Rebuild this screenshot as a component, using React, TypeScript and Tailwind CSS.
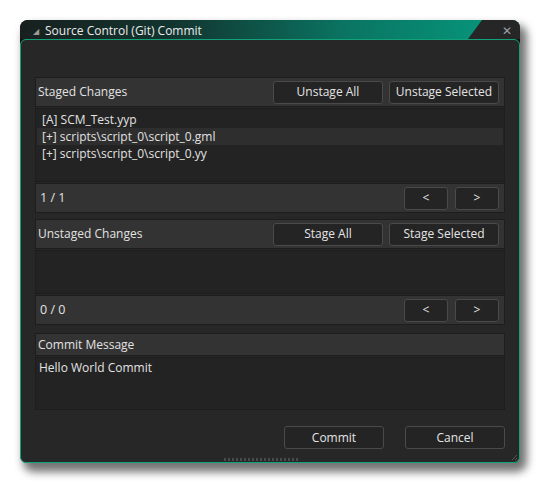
import { useState } from "react";

const font = { fontFamily: '"Open Sans", "Noto Sans", sans-serif' };

function Btn({ label, className = "" }: { label: string; className?: string }) {
  return (
    <button
      className={`flex h-[23px] items-center justify-center rounded-[3px] border border-[#4a4a4a] bg-[#242424] text-[12px] text-[#e4e4e4] ${className}`}
    >
      {label}
    </button>
  );
}

function Header({ title, actions, className = "h-[30px]" }: { title: string; actions?: string[]; className?: string }) {
  return (
    <div className={`flex items-center border border-[#1d1d1d] bg-[#333333] pl-[2px] pr-[5px] ${className}`}>
      <span className="flex-1 text-[12px] text-[#e2e2e2]">{title}</span>
      {actions && (
        <div className="flex gap-[6px]">
          <Btn label={actions[0]} className="w-[110px]" />
          <Btn label={actions[1]} className="w-[110px]" />
        </div>
      )}
    </div>
  );
}

function Pager({ text }: { text: string }) {
  return (
    <div className="mt-px flex h-[30px] items-center border border-[#1d1d1d] bg-[#333333] pl-[4px] pr-[5px]">
      <span className="flex-1 text-[12.5px] text-[#e2e2e2]">{text}</span>
      <div className="flex gap-[7px]">
        <Btn label="<" className="w-[44px] text-[11px]" />
        <Btn label=">" className="w-[44px] text-[11px]" />
      </div>
    </div>
  );
}

export default function App() {
  const [selected, setSelected] = useState(1);
  const staged = [
    "[A] SCM_Test.yyp",
    "[+] scripts\\script_0\\script_0.gml",
    "[+] scripts\\script_0\\script_0.yy",
  ];

  return (
    <div className="min-h-[484px] bg-white pl-[20px] pt-[20px]" style={font}>
      <div className="relative flex h-[443px] w-[500px] flex-col rounded-[8px] bg-[#121212] shadow-[5px_7px_9px_2px_rgba(0,0,0,0.55)]">
        {/* Title bar */}
        <div className="relative flex h-[19px] items-center overflow-hidden rounded-t-[8px] bg-[linear-gradient(90deg,#18201f_0%,#12342e_30%,#0a7462_65%,#069c80_100%)] pl-[13px] pt-[3px]">
          <span className="mr-[6px] text-[8px] leading-none text-[#9a9a9a]">◢</span>
          <span className="text-[12px] leading-none text-[#ececec]">Source Control (Git) Commit</span>
          <div className="absolute right-0 top-0 h-[19px] w-[52px] bg-[#262626] [clip-path:polygon(14px_0,100%_0,100%_100%,0_100%)]" />
          <span className="absolute right-[8px] top-[3px] text-[12px] leading-[16px] text-[#9aa0a6]">✕</span>
        </div>

        {/* Body */}
        <div className="relative flex flex-1 flex-col rounded-[6px] border border-[#12a27a] bg-[#272727] px-[14px] pt-[37px]">
          <Header title="Staged Changes" actions={["Unstage All", "Unstage Selected"]} />
          <div className="mt-px h-[74px] border border-[#1d1d1d] bg-[#232323] px-px pt-[2px]">
            {staged.map((s, i) => (
              <div
                key={s}
                onClick={() => setSelected(i)}
                className={`flex h-[17px] items-center pl-[5px] text-[12px] text-[#e2e2e2] ${
                  selected === i ? "bg-[#2e2e2e]" : ""
                }`}
              >
                {s}
              </div>
            ))}
          </div>
          <Pager text="1 / 1" />

          <div className="mt-[6px]">
            <Header title="Unstaged Changes" actions={["Stage All", "Stage Selected"]} />
          </div>
          <div className="mt-px h-[44px] border border-[#1d1d1d] bg-[#232323]" />
          <Pager text="0 / 0" />

          <div className="mt-[8px]">
            <Header title="Commit Message" className="h-[23px]" />
          </div>
          <div className="mt-px h-[53px] border border-[#1d1d1d] bg-[#232323] pl-[3px] pt-[1px] text-[12px] text-[#e2e2e2]">
            Hello World Commit
          </div>

          <div className="mt-[16px] flex justify-end gap-[21px]">
            <Btn label="Commit" className="w-[100px]" />
            <Btn label="Cancel" className="w-[100px]" />
          </div>

          {/* resize grips */}
          <div className="absolute bottom-[1px] left-[203px] h-[3px] w-[75px] bg-[repeating-linear-gradient(90deg,#4a4a4a_0_2px,transparent_2px_4px)]" />
          <svg className="absolute bottom-[1px] right-[1px]" width="8" height="8" viewBox="0 0 8 8">
            <path d="M7 2 L2 7 M7 5 L5 7" stroke="#555" strokeWidth="1" />
          </svg>
        </div>
      </div>
    </div>
  );
}
